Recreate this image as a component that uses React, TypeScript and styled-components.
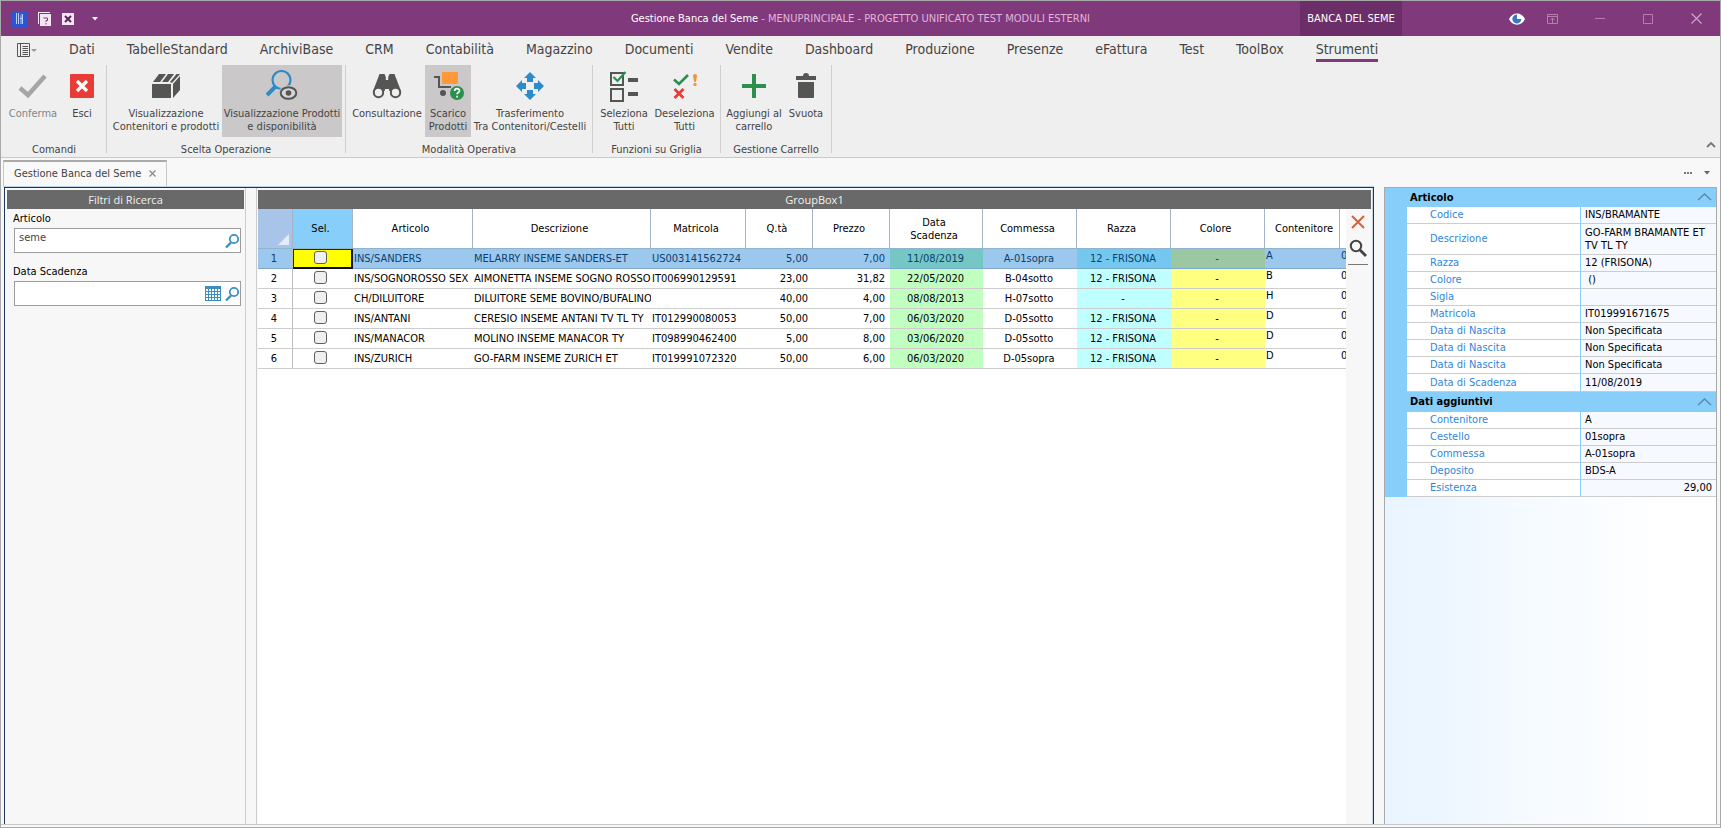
import React from 'react';
import styled, { createGlobalStyle, css } from 'styled-components';

const uiFont = '"DejaVu Sans Condensed", "Noto Sans", sans-serif';
const titleFont = '"Open Sans", "Noto Sans", sans-serif';

const GlobalStyle = createGlobalStyle`
  *, *::before, *::after { box-sizing: border-box; }
  body { margin: 0; font: 11px/13px ${uiFont}; color: #000; background: #f7f7f7; }
  button, input { font: inherit; color: inherit; margin: 0; }
  button { background: none; border: 0; padding: 0; cursor: pointer; }
  svg { display: block; flex: none; }
`;

const Window = styled.div`
  display: flex;
  flex-direction: column;
  min-height: 100vh;
  border: 1px solid #a9a9a9;
  background: #f7f7f7;
`;

/* ---------- title bar ---------- */

const TitleBar = styled.header`
  display: grid;
  grid-template-columns: 1fr auto 1fr;
  height: 35px;
  background: #80397b;
  color: #e2b4de;
`;

const QuickAccess = styled.div`
  display: flex;
  align-items: center;
  gap: 11px;
  padding-left: 10px;
`;

const WindowTitle = styled.h1`
  margin: 0;
  align-self: center;
  font-size: 11px;
  font-weight: 400;
  white-space: nowrap;
  strong { font-weight: 400; color: #fff; }
`;

const TitleRight = styled.div`
  display: flex;
  justify-content: flex-end;
  align-items: center;
`;

const ContextTab = styled.div`
  align-self: stretch;
  display: flex;
  align-items: center;
  justify-content: center;
  width: 102px;
  margin-right: 104px;
  background: #6b2e68;
  color: #fff;
  white-space: nowrap;
`;

const CaptionButton = styled.button<{ $narrow?: boolean }>`
  display: flex;
  align-items: center;
  justify-content: center;
  width: ${p => (p.$narrow ? 22 : 48)}px;
  height: 100%;
`;

const QuickButton = styled.button`
  display: flex;
`;

/* ---------- ribbon ---------- */

const Ribbon = styled.section`
  position: relative;
  height: 122px;
  background: #efefef;
  border-bottom: 1px solid #c8c8c8;
  color: #444;
`;

const RibbonTabs = styled.nav`
  display: flex;
  align-items: flex-start;
  height: 29px;
  padding-left: 16px;
`;

const MenuButton = styled.button`
  display: flex;
  align-items: center;
  width: 36px;
  height: 28px;
`;

const RibbonTab = styled.a<{ $active?: boolean }>`
  margin: 0 16px;
  height: 26px;
  padding-top: 4px;
  font-size: 14px;
  line-height: 19px;
  color: #444;
  text-decoration: none;
  white-space: nowrap;
  ${p => p.$active && css`border-bottom: 3px solid #80397b;`}
`;

const RibbonGroups = styled.div`
  display: flex;
  height: 88px;
  padding-left: 1px;
`;

const Group = styled.div`
  display: flex;
  flex-direction: column;
  align-items: center;
  padding: 0 3px;
  border-right: 1px solid #cfcfcf;
`;

const GroupButtons = styled.div`
  display: flex;
  height: 72px;
`;

const GroupLabel = styled.div`
  padding-top: 6px;
  white-space: nowrap;
`;

const RibbonButton = styled.button<{ $w: number; $active?: boolean }>`
  display: flex;
  flex-direction: column;
  align-items: center;
  width: ${p => p.$w}px;
  height: 72px;
  padding-top: 5px;
  text-align: center;
  background: ${p => (p.$active ? '#cac8c9' : 'transparent')};
  &:disabled { color: #858585; }
  svg { margin-bottom: 5px; }
  span { white-space: pre; }
`;

const CollapseButton = styled.button`
  position: absolute;
  right: 4px;
  bottom: 9px;
`;

/* ---------- document tabs ---------- */

const DocStrip = styled.div`
  display: flex;
  align-items: flex-end;
  justify-content: space-between;
  height: 29px;
  padding: 0 10px 0 2px;
  background: #f8f8f8;
`;

const DocTab = styled.div`
  display: flex;
  align-items: center;
  justify-content: space-between;
  width: 164px;
  height: 27px;
  padding: 0 10px 2px;
  border: 1px solid #c8c8c8;
  border-top: 2px solid #a9a9a9;
  border-bottom: 0;
  color: #444;
`;

const DocActions = styled.div`
  display: flex;
  align-items: center;
  gap: 12px;
  height: 29px;
`;

/* ---------- body ---------- */

const Body = styled.main`
  flex: 1;
  display: flex;
  gap: 10px;
  margin-bottom: 2px;
  padding: 0 3px;
  border-bottom: 1px solid #c8c8c8;
`;

const Workspace = styled.div`
  flex: 1;
  min-width: 0;
  display: flex;
  gap: 10px;
  border: 1px solid #1f3556;
  border-bottom: 0;
  box-shadow: 0 -1px 0 #b9d3ea, inset -1px 0 0 #c5d5e6;
`;

const FilterPanel = styled.section`
  flex: none;
  width: 241px;
  padding: 2px 1px 0 2px;
  border-right: 1px solid #cdcdcd;
`;

const PanelTitle = styled.h2`
  margin: 0;
  height: 19px;
  background: #696969;
  color: #f2f2f2;
  font: 400 11px/19px ${titleFont};
  text-align: center;
`;

const Field = styled.div`
  padding: 3px 3px 0 6px;
  & + & { padding-top: 12px; }
  label { display: block; height: 16px; line-height: 13px; }
`;

const FieldBox = styled.div`
  display: flex;
  align-items: center;
  gap: 3px;
  height: 25px;
  margin-left: 1px;
  border: 1px solid #9c9c9c;
  background: #fff;
  input {
    flex: 1;
    min-width: 0;
    height: 23px;
    padding: 0 0 6px 4px;
    border: 0;
    outline: 0;
    background: transparent;
    color: #444;
  }
`;

const GridPanel = styled.section`
  flex: 1;
  min-width: 0;
  display: flex;
  flex-direction: column;
  padding: 2px 2px 0 1px;
  border-left: 1px solid #cdcdcd;
`;

const GridRow = styled.div`
  flex: 1;
  display: flex;
`;

const GridArea = styled.div`
  flex: 1;
  min-width: 0;
  overflow: hidden;
  background: #fff;
`;

const SideTools = styled.div`
  flex: none;
  display: flex;
  flex-direction: column;
  align-items: center;
  gap: 10px;
  width: 25px;
  padding: 6px 3px 0 2px;
`;

const SideLine = styled.div`
  align-self: stretch;
  margin-top: -3px;
  border-top: 1px solid #777;
`;

const DataGrid = styled.table`
  table-layout: fixed;
  border-collapse: separate;
  border-spacing: 0;
  width: 1152px;
`;

const ColumnHead = styled.th<{ $fill?: string }>`
  height: 40px;
  padding: 0 14px 0 10px;
  border-right: 1px solid #a3b3c8;
  border-bottom: 1px solid #8fb4d0;
  background: ${p => p.$fill ?? '#fff'};
  font-weight: 400;
  white-space: normal;
`;

const Corner = styled(ColumnHead)`
  padding: 0 3px 3px 0;
  vertical-align: bottom;
  svg { margin-left: auto; }
`;

const RowHead = styled.th`
  padding: 0 2px 0 0;
  border-right: 1px solid #bdbdbd;
  border-bottom: 1px solid #cdcdcd;
  font-weight: 400;
`;

const cellPadding = { left: '0 0 0 1px', center: '0 2px 0 0', right: '0 5px 0 0' };

const Cell = styled.td<{ $align?: 'left' | 'center' | 'right'; $fill?: string; $top?: boolean }>`
  height: 20px;
  padding: ${p => cellPadding[p.$align ?? 'left']};
  border-bottom: 1px solid #cdcdcd;
  background: ${p => p.$fill ?? 'transparent'};
  text-align: ${p => p.$align ?? 'left'};
  vertical-align: ${p => (p.$top ? 'top' : 'middle')};
  overflow: hidden;
  white-space: nowrap;
`;

const Row = styled.tr<{ $selected?: boolean }>`
  ${p => p.$selected && css`
    background: #9bc8ec;
    color: #0b3f73;
    ${Cell}, ${RowHead} { border-bottom-color: #7fa9cc; }
  `}
`;

const CheckCell = styled(Cell)<{ $current?: boolean }>`
  padding-right: 5px;
  ${p => p.$current && css`
    && {
      padding-right: 4px;
      border: 1px solid #1a1a8c;
      border-right: 2px solid #15104d;
      border-bottom: 2px solid #0a0a28;
    }
    background: #ff0;
  `}
`;

const Check = styled.input`
  && {
    appearance: none;
    display: block;
    width: 13px;
    height: 13px;
    margin: 0 auto 3px;
    border: 1px solid #5f5f5f;
    border-radius: 3px;
    background: #efefef;
  }
`;

/* ---------- property panel ---------- */

const PropertyPanel = styled.aside`
  flex: none;
  width: 333px;
  border: 1px solid #a9a9a9;
  border-bottom: 0;
  background: linear-gradient(90deg, #e8f4ff, #f7fbff 50%, #fff 85%);
`;

const SectionTitle = styled.h3<{ $h: number }>`
  display: flex;
  align-items: center;
  justify-content: space-between;
  height: ${p => p.$h}px;
  margin: 0;
  padding: 0 4px 1px 25px;
  background: #87cefa;
  font-size: 11px;
  font-weight: 700;
`;

const Properties = styled.table`
  width: 100%;
  table-layout: fixed;
  border-collapse: separate;
  border-spacing: 0;
  border-left: 22px solid #87cefa;
  th {
    width: 173px;
    padding: 0 0 1px 23px;
    background: #fff;
    color: #2f86dc;
    font-weight: 400;
    text-align: left;
    border-bottom: 1px solid #cdcdcd;
  }
  td {
    padding: 0 4px 1px;
    border-left: 1px solid #87cefa;
    border-bottom: 1px solid #cdcdcd;
    background: #f6f9ff;
  }
`;

const PropertyRow = styled.tr<{ $h: number; $right?: boolean }>`
  height: ${p => p.$h}px;
  td { text-align: ${p => (p.$right ? 'right' : 'left')}; }
`;

/* ---------- icons ---------- */

const dark = '#555553';
const green = '#2d8f4e';
const red = '#e83c39';
const blue = '#2b8cc9';

const Lens = () => (
  <svg width="16" height="16" viewBox="0 0 16 16" fill="none" stroke="#3b8fbf">
    <circle cx="10" cy="6" r="4.200" strokeWidth="1.800" />
    <path d="M7 9.500 2 14.500" strokeWidth="2.400" />
  </svg>
);

const Calendar = () => (
  <svg width="16" height="15" viewBox="0 0 16 15">
    <path fill="#3b8fbf" d="M0 0h16v15H0z" />
    {[3, 6, 9, 12].map(y => [1, 4, 7, 10, 13].map(x => (
      <rect key={`${x}-${y}`} x={x} y={y} width="2" height="2" fill="#fff" />
    )))}
  </svg>
);

const Chevron = ({ w = 15, h = 8, c = '#5b87a8', sw = 1.4 }) => (
  <svg width={w} height={h} viewBox={`0 0 ${w} ${h}`} fill="none" stroke={c} strokeWidth={sw}>
    <path d={`M1 ${h - 1} ${w / 2} 1 ${w - 1} ${h - 1}`} />
  </svg>
);

const icons: Record<string, React.ReactNode> = {
  confirm: <path d="M3 18 11 25 28 6" fill="none" stroke="#a5a5a5" strokeWidth="4.500" />,
  exit: (
    <>
      <rect x="4" y="4" width="24" height="24" rx="1" fill={red} />
      <path d="m11 11 10 10M21 11 11 21" stroke="#fff" strokeWidth="3.200" />
    </>
  ),
  box: (
    <path fill={dark} d="M2 14h19v14H2zM9 4h7l-6 8H3zM18 4h6l-6 8h-6zM26.500 4H30l-8 9-2-1zM23 14l7-8v14l-7 8z" />
  ),
  lensEye: (
    <>
      <circle cx="15.500" cy="10" r="9" fill="none" stroke={blue} strokeWidth="2.200" />
      <path d="M9.500 16.500 1 25" stroke={blue} strokeWidth="4" />
      <ellipse cx="22.500" cy="23" rx="9.800" ry="7.800" fill="#cac8c9" />
      <ellipse cx="22.500" cy="23" rx="7.800" ry="5.800" fill="#d6d4d5" stroke={dark} strokeWidth="2" />
      <circle cx="22.500" cy="23" r="2.800" fill={dark} />
    </>
  ),
  binoculars: (
    <>
      <path fill={dark} d="M8.500 4h5l1.300 3v3h2.400V7l1.300-3h5l1.500 4 5 13H2l5-13z" />
      <path fill={dark} d="M12 12h8v6h-8z" />
      <circle cx="7.500" cy="22.500" r="4.700" fill="#efefef" stroke={dark} strokeWidth="2" />
      <circle cx="24.500" cy="22.500" r="4.700" fill="#efefef" stroke={dark} strokeWidth="2" />
      <path fill="#efefef" d="M14 19h4l1 9h-6z" />
      <path d="M12.200 22.500V18h7.600v4.500" fill="none" stroke={dark} strokeWidth="1" />
    </>
  ),
  cart: (
    <>
      <rect x="10" y="2" width="16" height="12" fill="#ff9838" />
      <path d="M2 7h5v10h12" fill="none" stroke={dark} strokeWidth="2" />
      <circle cx="11" cy="23" r="3" fill={dark} />
      <circle cx="25" cy="23" r="8" fill="#cac8c9" />
      <circle cx="25" cy="23" r="7" fill={green} />
      <path d="M22.600 21c0-3.200 4.900-3.200 4.900-.3 0 1.900-2.400 1.800-2.400 3.600M25.100 25.800v1.800" fill="none" stroke="#fff" strokeWidth="1.700" />
    </>
  ),
  move: (
    <path fill={blue} d="M16 2l6 6h-3v4h-6V8h-3zM16 30l6-6h-3v-4h-6v4h-3zM2 16l6-6v3h4v6H8v3zM30 16l-6-6v3h-4v6h4v3z" />
  ),
  select: (
    <>
      <path d="M3 3h12v12H3zM3 19h12v12H3z" fill="none" stroke={dark} strokeWidth="2" />
      <path d="M20 8h10v4H20zM20 22h10v4H20z" fill={dark} />
      <path d="m5.500 7 4 4 8-9" fill="none" stroke={green} strokeWidth="2.200" />
    </>
  ),
  deselect: (
    <>
      <path d="m5 9.500 5 4.500L19 5" fill="none" stroke={green} strokeWidth="2.600" />
      <path d="m5.500 19 9 9M14.500 19l-9 9" stroke={red} strokeWidth="2.800" />
      <path d="M24 6a2 2 0 0 1 4 0l-1.200 6h-1.600z" fill="#f79238" />
      <circle cx="26" cy="14.400" r="1.700" fill="#f79238" />
    </>
  ),
  plus: <path d="M14 4h4v10h10v4H18v10h-4V18H4v-4h10z" fill={green} />,
  trash: <path d="M6 6h7a3 3 0 0 1 6 0h7v4H6zM8 12h16v15a1 1 0 0 1-1 1H9a1 1 0 0 1-1-1z" fill={dark} />,
};

const Icon = ({ name }: { name: string }) => (
  <svg width="32" height="32" viewBox="0 0 32 32">{icons[name]}</svg>
);

/* ---------- data ---------- */

const tabs = ['Dati', 'TabelleStandard', 'ArchiviBase', 'CRM', 'Contabilità', 'Magazzino', 'Documenti', 'Vendite',
  'Dashboard', 'Produzione', 'Presenze', 'eFattura', 'Test', 'ToolBox', 'Strumenti'];

type Action = { text: string; icon: string; w: number; active?: boolean; disabled?: boolean };

const groups: { label: string; actions: Action[] }[] = [
  { label: 'Comandi', actions: [
    { text: 'Conferma', icon: 'confirm', w: 56, disabled: true },
    { text: 'Esci', icon: 'exit', w: 42 },
  ] },
  { label: 'Scelta Operazione', actions: [
    { text: 'Visualizzazione\nContenitori e prodotti', icon: 'box', w: 112 },
    { text: 'Visualizzazione Prodotti\ne disponibilità', icon: 'lensEye', w: 120, active: true },
  ] },
  { label: 'Modalità Operativa', actions: [
    { text: 'Consultazione', icon: 'binoculars', w: 76 },
    { text: 'Scarico\nProdotti', icon: 'cart', w: 46, active: true },
    { text: 'Trasferimento\nTra Contenitori/Cestelli', icon: 'move', w: 118 },
  ] },
  { label: 'Funzioni su Griglia', actions: [
    { text: 'Seleziona\nTutti', icon: 'select', w: 56 },
    { text: 'Deseleziona\nTutti', icon: 'deselect', w: 65 },
  ] },
  { label: 'Gestione Carrello', actions: [
    { text: 'Aggiungi al\ncarrello', icon: 'plus', w: 60 },
    { text: 'Svuota', icon: 'trash', w: 44 },
  ] },
];

const columnWidths = [35, 60, 120, 178, 95, 67, 77, 93, 94, 94, 94, 75, 70];

const heads = ['Articolo', 'Descrizione', 'Matricola', 'Q.tà', 'Prezzo', 'Data Scadenza', 'Commessa', 'Razza',
  'Colore', 'Contenitore', ''];

const rows = [
  ['INS/SANDERS', 'MELARRY INSEME SANDERS-ET', 'US003141562724', '5,00', '7,00', '11/08/2019', 'A-01sopra', '12 - FRISONA', '-', 'A', '0'],
  ['INS/SOGNOROSSO SEX', 'AIMONETTA INSEME SOGNO ROSSO', 'IT006990129591', '23,00', '31,82', '22/05/2020', 'B-04sotto', '12 - FRISONA', '-', 'B', '0'],
  ['CH/DILUITORE', 'DILUITORE SEME BOVINO/BUFALINO', '', '40,00', '4,00', '08/08/2013', 'H-07sotto', '-', '-', 'H', '0'],
  ['INS/ANTANI', 'CERESIO INSEME ANTANI TV TL TY', 'IT012990080053', '50,00', '7,00', '06/03/2020', 'D-05sotto', '12 - FRISONA', '-', 'D', '0'],
  ['INS/MANACOR', 'MOLINO INSEME MANACOR TY', 'IT098990462400', '5,00', '8,00', '03/06/2020', 'D-05sotto', '12 - FRISONA', '-', 'D', '0'],
  ['INS/ZURICH', 'GO-FARM INSEME ZURICH ET', 'IT019991072320', '50,00', '6,00', '06/03/2020', 'D-05sopra', '12 - FRISONA', '-', 'D', '0'],
];

const aligns = ['left', 'left', 'left', 'right', 'right', 'center', 'center', 'center', 'center', 'left', 'left'] as const;

const fills: Record<number, [string, string]> = {
  5: ['#c0ffc0', '#74c7c4'],
  7: ['#c0ffff', '#74c8f0'],
  8: ['#ffff80', '#9bc8a3'],
};

type Property = [label: string, value: string, height?: number];

const articleProps: Property[] = [
  ['Codice', 'INS/BRAMANTE'], ['Descrizione', 'GO-FARM BRAMANTE ET TV TL TY', 31], ['Razza', '12 (FRISONA)'],
  ['Colore', '\u00a0()'], ['Sigla', ''], ['Matricola', 'IT019991671675'], ['Data di Nascita', 'Non Specificata'],
  ['Data di Nascita', 'Non Specificata'], ['Data di Nascita', 'Non Specificata'], ['Data di Scadenza', '11/08/2019', 18],
];

const extraProps: Property[] = [
  ['Contenitore', 'A'], ['Cestello', '01sopra'], ['Commessa', 'A-01sopra'], ['Deposito', 'BDS-A'], ['Esistenza', '29,00'],
];

const PropertyTable = ({ items }: { items: Property[] }) => (
  <Properties>
    <tbody>
      {items.map(([label, value, h], i) => (
        <PropertyRow key={i} $h={h ?? 17} $right={label === 'Esistenza'}>
          <th scope="row">{label}</th>
          <td>{value}</td>
        </PropertyRow>
      ))}
    </tbody>
  </Properties>
);

/* ---------- page ---------- */

export default function App() {
  return (
    <Window>
      <GlobalStyle />
      <TitleBar>
        <QuickAccess>
          <svg width="16" height="16" viewBox="0 0 16 16">
            <path fill="#2b55d4" d="M0 0h16v16H0z" />
            <path d="M5.500 2v11M7.500 2v11M10 13V4.500L11.500 3v10M9 7.500h3" fill="none" stroke="#b9ccff" />
          </svg>
          <QuickButton aria-label="Aiuto">
            <svg width="13" height="14" viewBox="0 0 13 14">
              <path d="M0 0h12v1H1v11H0zM2 2h11v12H2z" fill="#f3e6f2" />
              <path d="M5.500 6h4v2.500H8V10M8 11v1.500" fill="none" stroke="#80397b" />
            </svg>
          </QuickButton>
          <QuickButton aria-label="Chiudi scheda">
            <svg width="12" height="12" viewBox="0 0 12 12">
              <path d="M0 0h12v12H0z" fill="#f3e6f2" />
              <path d="m3 3 6 6M9 3 3 9" stroke="#5c2358" strokeWidth="2" />
            </svg>
          </QuickButton>
          <QuickButton aria-label="Personalizza">
            <svg width="20" height="4" viewBox="0 0 20 4"><path d="M7 0h6l-3 3.500z" fill="#fff" /></svg>
          </QuickButton>
        </QuickAccess>
        <WindowTitle><strong>Gestione Banca del Seme</strong> - MENUPRINCIPALE - PROGETTO UNIFICATO TEST MODULI ESTERNI</WindowTitle>
        <TitleRight>
          <ContextTab>BANCA DEL SEME</ContextTab>
          <CaptionButton $narrow aria-label="Visualizza">
            <svg width="16" height="12" viewBox="0 0 16 12">
              <path d="M0 6C3-1.500 13-1.500 16 6 13 13.500 3 13.500 0 6z" fill="#fff" />
              <path d="M8 1.500A4.500 4.500 0 1 0 12.300 6H8z" fill="#3b78b8" />
            </svg>
          </CaptionButton>
          <CaptionButton aria-label="Opzioni barra">
            <svg width="11" height="10" viewBox="0 0 11 10" fill="none" stroke="#b27fae">
              <path d="M.5.5h10v9H.5zM.5 2.500h10M5.500 9V4M3.500 6l2-2 2 2" />
            </svg>
          </CaptionButton>
          <CaptionButton aria-label="Riduci">
            <svg width="10" height="1"><path d="M0 .5h10" stroke="#b27fae" /></svg>
          </CaptionButton>
          <CaptionButton aria-label="Ingrandisci">
            <svg width="10" height="10"><path d="M.5.5h9v9h-9z" fill="none" stroke="#b27fae" /></svg>
          </CaptionButton>
          <CaptionButton aria-label="Chiudi">
            <svg width="11" height="11"><path d="m.5.5 10 10M10.500.5l-10 10" stroke="#cfa4cc" strokeWidth="1.200" /></svg>
          </CaptionButton>
        </TitleRight>
      </TitleBar>

      <Ribbon>
        <RibbonTabs>
          <MenuButton aria-label="Menu">
            <svg width="20" height="14" viewBox="0 0 20 14" fill="none" stroke="#555">
              <path d="M.5.500h12v13H.5zM3.500.5v13M5.500 3.500h5.500M5.500 5.500h5.500M5.500 7.500h5.500M5.500 9.500h5.500M5.500 11.500h5.500" />
              <path d="M14 6h6l-3 3z" fill="#999" stroke="none" />
            </svg>
          </MenuButton>
          {tabs.map(t => <RibbonTab key={t} href="#" $active={t === 'Strumenti'}>{t}</RibbonTab>)}
        </RibbonTabs>
        <RibbonGroups>
          {groups.map(g => (
            <Group key={g.label}>
              <GroupButtons>
                {g.actions.map(a => (
                  <RibbonButton key={a.icon} $w={a.w} $active={a.active} disabled={a.disabled}>
                    <Icon name={a.icon} />
                    <span>{a.text}</span>
                  </RibbonButton>
                ))}
              </GroupButtons>
              <GroupLabel>{g.label}</GroupLabel>
            </Group>
          ))}
        </RibbonGroups>
        <CollapseButton aria-label="Comprimi barra"><Chevron w={10} h={6} c="#777" sw={1.8} /></CollapseButton>
      </Ribbon>

      <DocStrip>
        <DocTab>
          Gestione Banca del Seme
          <QuickButton aria-label="Chiudi">
            <svg width="7" height="7"><path d="m.5.5 6 6M6.500.5l-6 6" stroke="#888" strokeWidth="1.200" /></svg>
          </QuickButton>
        </DocTab>
        <DocActions>
          <QuickButton aria-label="Altro">
            <svg width="8" height="2"><path d="M0 0h2v2H0zM3 0h2v2H3zM6 0h2v2H6z" fill="#777" /></svg>
          </QuickButton>
          <QuickButton aria-label="Elenco finestre">
            <svg width="6" height="4" viewBox="0 0 6 4"><path d="M0 0h6L3 3.500z" fill="#666" /></svg>
          </QuickButton>
        </DocActions>
      </DocStrip>

      <Body>
        <Workspace>
          <FilterPanel>
            <PanelTitle>Filtri di Ricerca</PanelTitle>
            <Field>
              <label htmlFor="articolo">Articolo</label>
              <FieldBox>
                <input id="articolo" defaultValue="seme" />
                <QuickButton aria-label="Cerca articolo"><Lens /></QuickButton>
              </FieldBox>
            </Field>
            <Field>
              <label htmlFor="scadenza">Data Scadenza</label>
              <FieldBox>
                <input id="scadenza" />
                <QuickButton aria-label="Calendario"><Calendar /></QuickButton>
                <QuickButton aria-label="Cerca data"><Lens /></QuickButton>
              </FieldBox>
            </Field>
          </FilterPanel>

          <GridPanel>
            <PanelTitle>GroupBox1</PanelTitle>
            <GridRow>
              <GridArea>
                <DataGrid>
                  <colgroup>{columnWidths.map((w, i) => <col key={i} width={w} />)}</colgroup>
                  <thead>
                    <tr>
                      <Corner $fill="#a9c4e9" aria-label="Riga">
                        <svg width="11" height="11"><path d="M11 0v11H0z" fill="#e3ecf8" /></svg>
                      </Corner>
                      <ColumnHead $fill="#87cefa">Sel.</ColumnHead>
                      {heads.map((h, i) => <ColumnHead key={i}>{h}</ColumnHead>)}
                    </tr>
                  </thead>
                  <tbody>
                    {rows.map((r, n) => (
                      <Row key={n} $selected={n === 0}>
                        <RowHead scope="row">{n + 1}</RowHead>
                        <CheckCell $align="center" $current={n === 0}>
                          <Check type="checkbox" aria-label={`Seleziona riga ${n + 1}`} />
                        </CheckCell>
                        {r.map((v, i) => (
                          <Cell key={i} $align={aligns[i]} $fill={fills[i]?.[n === 0 ? 1 : 0]} $top={i > 8}>{v}</Cell>
                        ))}
                      </Row>
                    ))}
                  </tbody>
                </DataGrid>
              </GridArea>
              <SideTools>
                <QuickButton aria-label="Elimina">
                  <svg width="14" height="14"><path d="m1 1 12 12M13 1 1 13" stroke="#d9603f" strokeWidth="2" /></svg>
                </QuickButton>
                <QuickButton aria-label="Trova">
                  <svg width="18" height="18" fill="none" stroke="#444">
                    <circle cx="7" cy="7" r="5.200" strokeWidth="2" />
                    <path d="m11 11 6 6" strokeWidth="2.800" />
                  </svg>
                </QuickButton>
                <SideLine />
              </SideTools>
            </GridRow>
          </GridPanel>
        </Workspace>

        <PropertyPanel>
          <SectionTitle $h={19}>Articolo<Chevron /></SectionTitle>
          <PropertyTable items={articleProps} />
          <SectionTitle $h={20}>Dati aggiuntivi<Chevron /></SectionTitle>
          <PropertyTable items={extraProps} />
        </PropertyPanel>
      </Body>
    </Window>
  );
}
